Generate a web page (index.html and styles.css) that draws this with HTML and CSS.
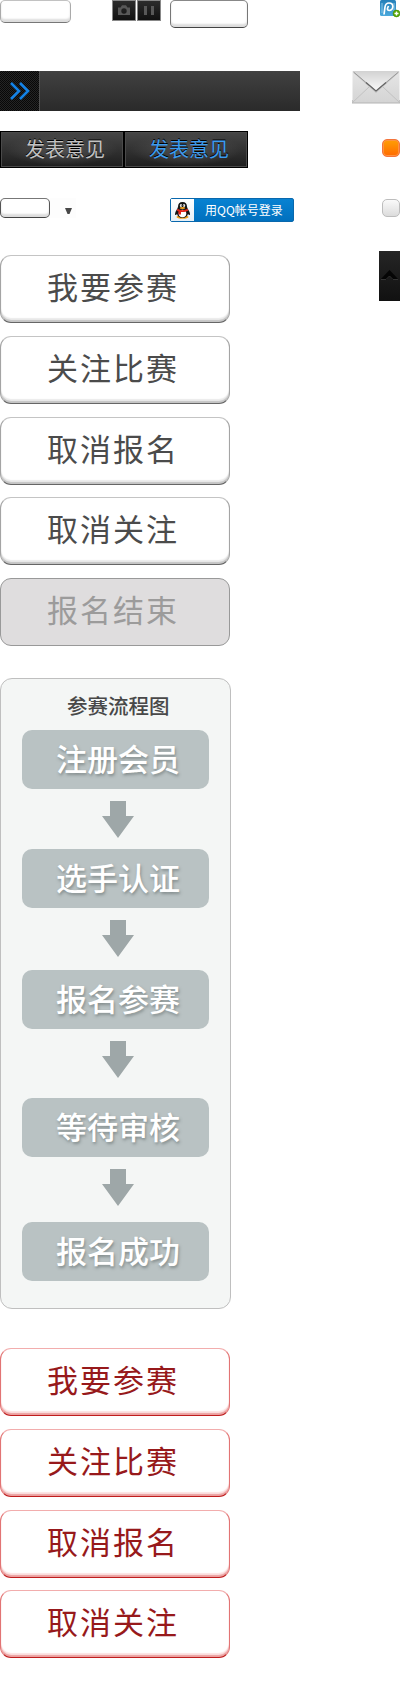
FILE: index.html
```html
<!DOCTYPE html>
<html lang="zh-CN">
<head>
<meta charset="utf-8">
<title>参赛</title>
<link rel="stylesheet" href="styles.css">
</head>
<body>
<div class="page">
  <main class="main">
    <div class="row row-top">
      <span class="pill pill-sm"></span>
      <div class="media">
        <span class="media-btn"><svg width="12" height="11" viewBox="0 0 12 11"><path fill="#585858" fill-rule="evenodd" d="M0 2.5h2.500L4 .3h4l1.500 2.200H12V10H0zM6 3.300a2.700 2.700 0 1 0 0 5.400 2.700 2.700 0 0 0 0-5.400z"/></svg></span>
        <span class="media-btn"><svg width="10" height="9" viewBox="0 0 10 9"><path fill="#585858" d="M0 0h3v9H0zM7 0h3v9H7z"/></svg></span>
      </div>
      <span class="pill pill-lg"></span>
    </div>
    <div class="bar">
      <div class="bar-icon"><svg width="20" height="18" viewBox="0 0 20 18"><path fill="none" stroke="#1482e6" stroke-width="2.600" d="M1 1l8 8-8 8M10 1l8 8-8 8"/></svg></div>
    </div>
    <div class="tabs">
      <div class="tab"><span>发表意见</span></div>
      <div class="tab tab-active"><span>发表意见</span></div>
    </div>
    <div class="row row-login">
      <span class="pill pill-xs"></span>
      <span class="caret"><svg width="7" height="6" viewBox="0 0 7 6"><path fill="#484848" d="M0 0h7L4.500 6h-2z"/></svg></span>
      <div class="qq">
        <span class="qq-icon"><svg width="17" height="17" viewBox="0 0 17 17">
          <ellipse cx="8.500" cy="15" rx="6" ry="1.800" fill="#f5a11c"/>
          <path fill="#141414" d="M8.500 0C5.500 0 4 2 4 4.700 4 6.800 1 9 1 12c0 1.800 1.200 1 2 0 .8 3 2.800 3.800 5.500 3.800S13.200 15 14 12c.8 1 2 1.800 2 0 0-3-3-5.200-3-7.300C13 2 11.500 0 8.500 0z"/>
          <ellipse cx="8.500" cy="11.500" rx="3.800" ry="3.800" fill="#fff"/>
          <ellipse cx="7" cy="3.600" rx="1.100" ry="1.500" fill="#fff"/><ellipse cx="10" cy="3.600" rx="1.100" ry="1.500" fill="#fff"/>
          <circle cx="7.300" cy="3.800" r=".5"/><circle cx="9.700" cy="3.800" r=".5"/>
          <ellipse cx="8.500" cy="6" rx="2.700" ry=".9" fill="#f5a11c"/>
          <path fill="#e2231a" d="M3.300 6.800c3 1.900 7.400 1.900 10.400 0l.5 2C12 10 9 10.300 7 10v2.500H4.500V9.500L3 8.800z"/>
        </svg></span>
        <span class="qq-text">用<b>QQ</b>帐号登录</span>
      </div>
    </div>
    <div class="buttons">
      <div class="btn"><span>我要参赛</span></div>
      <div class="btn"><span>关注比赛</span></div>
      <div class="btn btn-near"><span>取消报名</span></div>
      <div class="btn"><span>取消关注</span></div>
      <div class="btn btn-off"><span>报名结束</span></div>
    </div>
    <section class="flow">
      <h2 class="flow-title">参赛流程图</h2>
      <div class="step">注册会员</div>
      <svg class="arrow" width="32" height="37" viewBox="0 0 32 37"><path d="M8 0h16v15h8L16 37 0 15h8z"/></svg>
      <div class="step">选手认证</div>
      <svg class="arrow" width="32" height="37" viewBox="0 0 32 37"><path d="M8 0h16v15h8L16 37 0 15h8z"/></svg>
      <div class="step step-third">报名参赛</div>
      <svg class="arrow" width="32" height="37" viewBox="0 0 32 37"><path d="M8 0h16v15h8L16 37 0 15h8z"/></svg>
      <div class="step step-fourth">等待审核</div>
      <svg class="arrow" width="32" height="37" viewBox="0 0 32 37"><path d="M8 0h16v15h8L16 37 0 15h8z"/></svg>
      <div class="step step-last">报名成功</div>
    </section>
    <div class="buttons buttons-red">
      <div class="btn"><span>我要参赛</span></div>
      <div class="btn"><span>关注比赛</span></div>
      <div class="btn btn-near"><span>取消报名</span></div>
      <div class="btn"><span>取消关注</span></div>
    </div>
  </main>
  <aside class="side">
    <svg class="share" width="20" height="18" viewBox="0 0 20 18">
      <defs><linearGradient id="blue" x2="0" y2="1"><stop stop-color="#237fb9"/><stop offset="1" stop-color="#4ba9dc"/></linearGradient></defs>
      <rect width="16" height="16" rx="1.500" fill="url(#blue)"/>
      <path d="M2 13V3M14 13V3" stroke="#8bc7e8" stroke-width="1"/>
      <path fill="none" stroke="#fff" stroke-width="1.700" d="M4 14.500L5 7c.4-2.600 1.900-4 4-4 2.300 0 3.800 1.400 3.800 3.600S11.200 10.500 9.300 10.500c-1.500 0-2.200-1-1.700-2.500L8.500 6"/>
      <circle cx="16.500" cy="13.500" r="3.400" fill="#57a800" stroke="#3f8b04" stroke-width=".6"/>
      <path d="M14.500 13.500h4M16.500 11.500v4" stroke="#fff" stroke-width="1.400"/>
    </svg>
    <svg class="mail" width="48" height="34" viewBox="0 0 48 34">
      <defs>
        <linearGradient id="flap" x2="0" y2="1"><stop stop-color="#d2d2d2"/><stop offset="1" stop-color="#fafafa"/></linearGradient>
        <linearGradient id="paper" x2="0" y2="1"><stop stop-color="#e6e6e6"/><stop offset="1" stop-color="#d4d4d4"/></linearGradient>
      </defs>
      <path fill="#b4b4b4" d="M0 29h48v3.500H0z"/>
      <path fill="url(#paper)" d="M.5 0h47v31.500H.5z"/>
      <path fill="none" stroke="#c2c2c2" d="M1 31l16-15M47 31L31 16"/>
      <path fill="#aaa" opacity=".5" d="M1 1.500L24 22 47 1.500z"/>
      <path fill="url(#flap)" d="M1 0h46L24 20z"/>
      <path fill="none" stroke="#999" d="M1.500 1L24 20 46.500 1"/>
      <path fill="none" stroke="#666" stroke-width="1.200" d="M14 11.500L24 20l10-8.500"/>
    </svg>
    <span class="box box-orange"></span>
    <span class="box box-gray"></span>
    <div class="to-top"><svg width="17" height="10" viewBox="0 0 17 10"><path fill="#050505" d="M8.500 0L17 9v1h-5L8.500 6.500 5 10H0V9z"/><path fill="none" stroke="#343434" d="M0 9.500h5L8.500 6 12 9.500h5"/></svg></div>
  </aside>
</div>
</body>
</html>
```

FILE: styles.css
```css
* { box-sizing: border-box; }
body {
  margin: 0;
  background: #fff;
  font-family: "Noto Sans CJK SC", sans-serif;
}
svg { display: block; flex: none; }
.page { display: flex; justify-content: space-between; width: 400px; height: 1700px; }
.main { display: flex; flex-direction: column; width: 300px; }
.row { display: flex; align-items: flex-start; }
.row-top { height: 71px; }

.pill {
  border: 1px solid #999;
  border-top-color: #bbb;
  border-bottom-color: #555;
  border-radius: 5px;
  background: #fff;
  box-shadow: inset 0 -3px 2px #ddd;
}
.pill-sm { width: 71px; height: 23px; margin-right: 41px; border-color: #c2c2c2 #aaa #777; }
.pill-lg { width: 78px; height: 28px; margin-left: 9px; border-color: #888 #777 #444; }
.pill-xs { width: 50px; height: 20px; border-color: #777 #555 #444; }

.media { display: flex; gap: 1px; }
.media-btn {
  display: flex;
  align-items: center;
  justify-content: center;
  width: 24px;
  height: 21px;
  border: 1px solid #888;
  background: linear-gradient(#2c2c2c, #111);
}

.bar { width: 300px; height: 40px; background: linear-gradient(#414141, #2a2a2a); }
.bar-icon {
  display: flex;
  align-items: center;
  width: 40px;
  height: 40px;
  padding-left: 10px;
  border-right: 1px solid #505050;
  background: repeating-conic-gradient(#080808 0 25%, #242424 0 50%) 0 0 / 2px 2px;
}

.tabs { display: flex; margin-top: 20px; height: 37px; }
.tab {
  width: 124px;
  height: 37px;
  border: 1px solid #000;
  background: radial-gradient(ellipse at 50% 50%, #505050 0, rgba(60, 60, 60, 0) 65%), linear-gradient(#464646, #1e1e1e);
  box-shadow: inset 0 0 0 1px #4a4a4a;
  padding-left: 24px;
  font-size: 20px;
  line-height: 34px;
  color: #c2c2c2;
  text-shadow: 0 -1px 0 #000;
}
.tab-active { padding-left: 24px; color: #3c9cf0; }

.row-login { height: 24px; margin-top: 30px; }
.caret { width: 26px; height: 20px; padding: 10px 0 0 15px; background: #fdfdfd; }
.qq {
  display: flex;
  width: 124px;
  height: 24px;
  margin-left: 94px;
  border: 1px solid #0968ad;
  border-radius: 2px;
  background: linear-gradient(#0882d2, #0070be);
}
.qq-icon { width: 23px; padding: 3px 0 0 3px; background: linear-gradient(#fff, #e5eff7); }
.qq-text { padding-left: 11px; font-size: 12px; line-height: 22px; color: #fff; white-space: nowrap; }
.qq-text b { font-weight: 400; }

.buttons { display: flex; flex-direction: column; gap: 13px; margin-top: 33px; }
.btn {
  width: 230px;
  height: 68px;
  padding-left: 46px;
  border: 1px solid;
  border-color: #c4c4c4 #a4a4a4 #666;
  border-radius: 11px;
  background: #fff;
  box-shadow: inset 0 -2px 1px #c5c5c5, inset 0 -4px 1px #ececec;
  font-size: 31px;
  letter-spacing: 2px;
  line-height: 60px;
  color: #4b4b4b;
}
.btn-near { margin-bottom: -1px; }
.btn-off { border-color: #999; background: #dfddde; box-shadow: none; color: #9c9b9b; }

.flow {
  display: flex;
  flex-direction: column;
  width: 231px;
  height: 631px;
  margin-top: 32px;
  padding: 13px 0 0 21px;
  border: 1px solid #bfbfbf;
  border-radius: 12px;
  background: #f4f6f5;
}
.flow-title {
  margin: 0 0 12px;
  padding-left: 45px;
  font-size: 20.5px;
  font-weight: 500;
  line-height: 26px;
  color: #484848;
}
.step {
  flex: none;
  width: 187px;
  height: 59px;
  padding-left: 34px;
  border-radius: 10px;
  background: #b9c2c3;
  font-size: 31px;
  font-weight: 500;
  line-height: 56px;
  color: #fff;
  text-shadow: 1px 2px 3px rgba(80, 90, 90, .5);
}
.arrow { margin: 12px 0 11px 80px; fill: #9ea7a8; }
.step-third { margin-top: 2px; }
.step-fourth { margin-top: 9px; }
.step-last { margin-top: 5px; }

.buttons-red { margin-top: 39px; }
.buttons-red .btn {
  border-color: #f2adad #e27474 #c01e1e;
  box-shadow: inset 0 -2px 1px #eba0a0, inset 0 -4px 1px #fce3e3;
  color: #97191b;
}

.side { display: flex; flex-direction: column; align-items: flex-end; width: 60px; }
.mail { margin-top: 53px; }
.box { width: 18px; height: 18px; border-radius: 5px; }
.box-orange { margin-top: 34px; border: 1px solid #f4743b; background: linear-gradient(#ff9f05, #ff6a00); box-shadow: inset 0 0 0 1px #ff9440; }
.box-gray { margin-top: 42px; border: 1px solid #bdbdbd; background: linear-gradient(#fafafa, #dcdcdc); }
.to-top { width: 21px; height: 50px; margin-top: 34px; padding: 19px 0 0 2px; background: linear-gradient(#252525, #111); }
```
